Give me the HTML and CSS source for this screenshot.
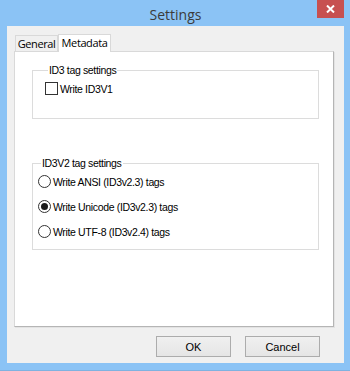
FILE: index.html
```html
<!DOCTYPE html>
<html lang="en">

<head>
    <meta charset="UTF-8">
    <meta name="viewport" content="width=device-width, initial-scale=1.0">
    <title>Settings</title>
    <link rel="stylesheet" href="styles.css">
</head>

<body>
    <div class="window">
        <div class="titlebar">
            <span></span>
            <span class="title">Settings</span>
            <button type="button" class="close">
                <svg width="9" height="8" viewBox="0 0 9 8">
                    <path d="M1 0.5 L8 7.5 M8 0.5 L1 7.5" stroke="#fff" stroke-width="2" fill="none" />
                </svg>
            </button>
        </div>
        <div class="client">
            <div class="tabs">
                <div class="tab general">General</div>
                <div class="tab active">Metadata</div>
            </div>
            <div class="panel">
                <fieldset class="group first">
                    <legend>ID3 tag settings</legend>
                    <label class="option check"><span class="box"></span>Write ID3V1</label>
                </fieldset>
                <fieldset class="group second">
                    <legend>ID3V2 tag settings</legend>
                    <label class="option"><span class="radio"></span>Write ANSI (ID3v2.3) tags</label>
                    <label class="option"><span class="radio on"></span>Write Unicode (ID3v2.3) tags</label>
                    <label class="option"><span class="radio"></span>Write UTF-8 (ID3v2.4) tags</label>
                </fieldset>
            </div>
            <div class="buttons">
                <button type="button" class="btn">OK</button>
                <button type="button" class="btn">Cancel</button>
            </div>
        </div>
    </div>
</body>

</html>
```

FILE: styles.css
```css
body {
    margin: 0;
    background-color: #8bc3f5;
    font-family: 'Liberation Sans', Arial, sans-serif;
    font-size: 10.5px;
    color: #000;
}

.window {
    width: 350px;
    height: 371px;
    box-sizing: border-box;
    padding: 0 6px 7px 7px;
    display: flex;
    flex-direction: column;
    background-color: #8bc3f5;
    border-bottom: 1px solid #7fb2e0;
}

.titlebar {
    height: 26px;
    display: grid;
    grid-template-columns: 1fr auto 1fr;
    align-items: start;
}

.title {
    font-family: 'Open Sans', sans-serif;
    font-size: 14px;
    color: #3b3b3b;
    line-height: 29px;
}

.close {
    justify-self: end;
    width: 27px;
    height: 18px;
    border: none;
    padding: 0;
    background-color: #c75050;
    display: flex;
    align-items: center;
    justify-content: center;
}

.client {
    flex: 1;
    background-color: #f0f0f0;
    padding: 8px 10px 0 7px;
    display: flex;
    flex-direction: column;
}

.tabs {
    display: flex;
    align-items: flex-end;
    height: 17px;
    padding-left: 1px;
    position: relative;
    z-index: 2;
}

.tab {
    font-family: 'Open Sans', sans-serif;
    font-size: 11px;
    letter-spacing: -0.4px;
    height: 15px;
    line-height: 15px;
    text-align: center;
    border: 1px solid #d9d9d9;
    border-bottom: none;
    background-color: #f0f0f0;
}

.tab.general {
    width: 41px;
}

.tab.active {
    width: 51px;
    height: 17px;
    line-height: 16px;
    background-color: #fff;
    margin-bottom: -1px;
}

.panel {
    height: 276px;
    box-sizing: border-box;
    background-color: #fff;
    border: 1px solid #d9d9d9;
    border-right-color: #b5b5b5;
    border-bottom-color: #b5b5b5;
    box-shadow: 1px 1px 0 #e3e3e3;
    padding: 12px 14px 0 17px;
}

.group {
    margin: 0;
    border: 1px solid #dcdcdc;
    padding: 0 0 0 12px;
    display: flex;
    flex-direction: column;
    letter-spacing: -0.35px;
}

.group legend {
    padding: 0 1px;
    margin-left: 3px;
    line-height: 13px;
}

.group.first {
    height: 48px;
    padding-top: 5px;
}

.group.second {
    margin-top: 38px;
    height: 86px;
    padding-left: 5px;
    padding-top: 5px;
}

.option {
    display: flex;
    align-items: center;
    gap: 2px;
    height: 13px;
}

.second .option + .option {
    margin-top: 12px;
}

.box {
    width: 11px;
    height: 11px;
    border: 1px solid #333;
    background-color: #fff;
}

.radio {
    width: 11px;
    height: 11px;
    border: 1px solid #333;
    border-radius: 50%;
    background-color: #fff;
    display: flex;
    align-items: center;
    justify-content: center;
}

.radio.on::after {
    content: "";
    width: 7px;
    height: 7px;
    border-radius: 50%;
    background-color: #1a1a1a;
}

.buttons {
    display: flex;
    justify-content: flex-end;
    gap: 14px;
    margin-top: 9px;
    padding-right: 14px;
}

.btn {
    width: 75px;
    height: 21px;
    font-family: 'Liberation Sans', Arial, sans-serif;
    font-size: 11px;
    color: #000;
    border: 1px solid #acacac;
    background: linear-gradient(#f0f0f0, #e5e5e5);
    padding: 0;
}
```
